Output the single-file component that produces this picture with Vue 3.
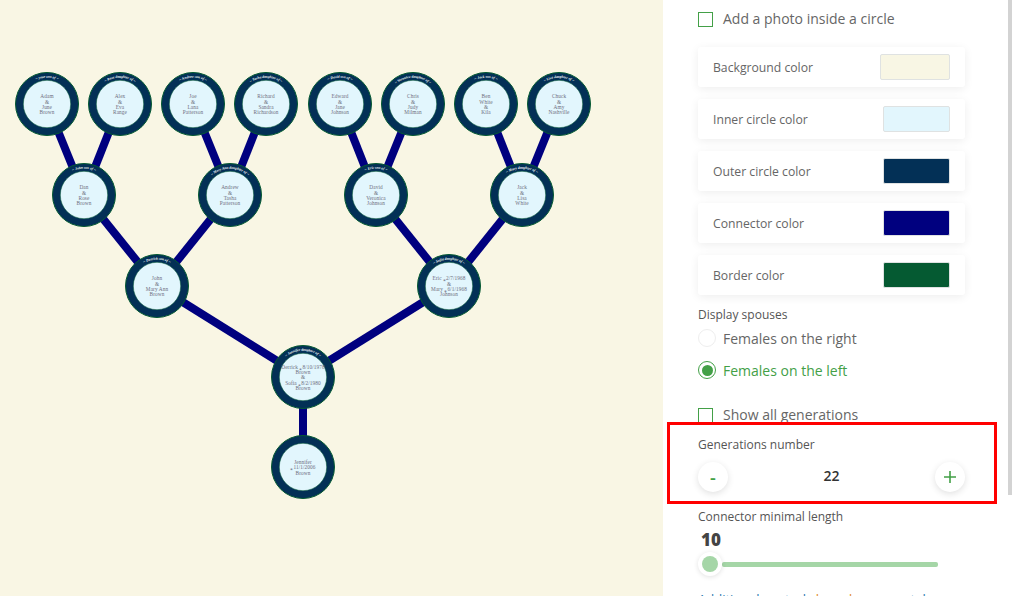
<script setup>
const nodes = [
  { x: 47, y: 104, arc: '~ your son of ~', lines: ['Adam', '&', 'June', 'Brown'] },
  { x: 120, y: 104, arc: '~ Rose daughter of ~', lines: ['Alex', '&', 'Eva', 'Range'] },
  { x: 193, y: 104, arc: '~ Andrew son of ~', lines: ['Joe', '&', 'Lana', 'Patterson'] },
  { x: 266, y: 104, arc: '~ Tasha daughter of ~', lines: ['Richard', '&', 'Sandra', 'Richardson'] },
  { x: 340, y: 104, arc: '~ David son of ~', lines: ['Edward', '&', 'Jane', 'Johnson'] },
  { x: 413, y: 104, arc: '~ Veronica daughter of ~', lines: ['Chris', '&', 'Judy', 'Milman'] },
  { x: 486, y: 104, arc: '~ Jack son of ~', lines: ['Ben', 'White', '&', 'Kila'] },
  { x: 559, y: 104, arc: '~ Lisa daughter of ~', lines: ['Chuck', '&', 'Amy', 'Nashville'] },
  { x: 84, y: 195, arc: '~ John son of ~', lines: ['Dan', '&', 'Rose', 'Brown'] },
  { x: 230, y: 195, arc: '~ Mary Ann daughter of ~', lines: ['Andrew', '&', 'Tasha', 'Patterson'] },
  { x: 376, y: 195, arc: '~ Eric son of ~', lines: ['David', '&', 'Veronica', 'Johnson'] },
  { x: 522, y: 195, arc: '~ Mary daughter of ~', lines: ['Jack', '&', 'Lisa', 'White'] },
  { x: 157, y: 286, arc: '~ Derrick son of ~', lines: ['John', '&', 'Mary Ann', 'Brown'] },
  { x: 449, y: 286, arc: '~ Sofia daughter of ~', lines: ['Eric  ⁎2/7/1968', '&', 'Mary  ⁎6/1/1968', 'Johnson'] },
  { x: 303, y: 377, arc: '~ Jennifer daughter of ~', lines: ['Derrick  ⁎8/10/1978', 'Brown', '&', 'Sofia  ⁎8/2/1980', 'Brown'] },
  { x: 303, y: 467, arc: '', lines: ['Jennifer', '⁎11/1/2006', 'Brown'] },
]

const links = [
  [0, 8], [1, 8], [2, 9], [3, 9], [4, 10], [5, 10], [6, 11], [7, 11],
  [8, 12], [9, 12], [10, 13], [11, 13], [12, 14], [13, 14], [14, 15],
].map(([a, b]) => ({ id: `${a}-${b}`, x1: nodes[a].x, y1: nodes[a].y, x2: nodes[b].x, y2: nodes[b].y }))

const arcPath = (n) => `M ${n.x - 26.3} ${n.y} A 26.3 26.3 0 0 1 ${n.x + 26.3} ${n.y}`
const lineY = (n, i) => n.y + 2.2 + (i - (n.lines.length - 1) / 2) * 5.3

const swatches = [
  { label: 'Background color', color: '#f8f6e4', wide: true },
  { label: 'Inner circle color', color: '#e2f6fd' },
  { label: 'Outer circle color', color: '#033056' },
  { label: 'Connector color', color: '#00007f' },
  { label: 'Border color', color: '#055a32' },
]
</script>

<template>
  <div class="page">
    <main class="canvas">
      <svg class="tree" width="663" height="596" viewBox="0 0 663 596">
        <defs>
          <path v-for="(n, i) in nodes" :id="`arc${i}`" :key="i" :d="arcPath(n)" />
        </defs>
        <line
          v-for="l in links"
          :key="l.id"
          class="link"
          :x1="l.x1"
          :y1="l.y1"
          :x2="l.x2"
          :y2="l.y2"
        />
        <g v-for="(n, i) in nodes" :key="n.x + '-' + n.y">
          <circle class="outer" :cx="n.x" :cy="n.y" r="31.5" />
          <circle class="inner" :cx="n.x" :cy="n.y" r="23.7" />
          <text class="arc">
            <textPath :href="`#arc${i}`" startOffset="50%" text-anchor="middle">{{ n.arc }}</textPath>
          </text>
          <text
            v-for="(t, j) in n.lines"
            :key="j"
            class="name"
            :x="n.x"
            :y="lineY(n, j)"
            text-anchor="middle"
          >{{ t }}</text>
        </g>
      </svg>
    </main>

    <aside class="panel">
      <div class="content">
        <label class="check first">
          <span class="box"></span>
          <span>Add a photo inside a circle</span>
        </label>

        <div class="cards">
          <div v-for="s in swatches" :key="s.label" class="card">
            <span>{{ s.label }}</span>
            <span class="swatch" :class="{ wide: s.wide }" :style="{ background: s.color }"></span>
          </div>
        </div>

        <div class="caption spouses">Display spouses</div>
        <div class="radio">
          <span class="dot"></span>
          <span>Females on the right</span>
        </div>
        <div class="radio on">
          <span class="dot"><i></i></span>
          <span>Females on the left</span>
        </div>

        <label class="check all">
          <span class="box"></span>
          <span>Show all generations</span>
        </label>

        <div class="caption gens">Generations number</div>
        <div class="stepper">
          <span class="round">-</span>
          <span class="count">22</span>
          <span class="round">
            <svg width="14" height="14" viewBox="0 0 14 14"><path d="M7 1v12M1 7h12" stroke="#43a047" stroke-width="1.6" fill="none" /></svg>
          </span>
        </div>

        <div class="caption connector">Connector minimal length</div>
        <div class="value">10</div>
        <div class="slider">
          <span class="thumb"><i></i></span>
          <span class="track"></span>
        </div>

        <div class="more">Additional controls <b>based on</b> parental</div>
      </div>
      <div class="scrollbar"></div>
      <div class="highlight"></div>
    </aside>
  </div>
</template>

<style scoped>
.page {
  width: 1012px;
  height: 596px;
  display: flex;
  overflow: hidden;
  background: #fff;
  font-family: "Open Sans", "Liberation Sans", sans-serif;
  color: #555;
}
.canvas {
  width: 663px;
  flex: none;
  background: #f9f6e4;
}
.tree {
  display: block;
}
.link {
  stroke: #00007f;
  stroke-width: 8;
}
.outer {
  fill: #033056;
  stroke: #055a32;
  stroke-width: 1;
}
.inner {
  fill: #e2f6fd;
  stroke: #055a32;
  stroke-width: 0.5;
}
.arc {
  font-family: "Liberation Serif", serif;
  font-size: 3.6px;
  font-style: italic;
  font-weight: 700;
  fill: #fff;
}
.name {
  font-family: "Liberation Serif", serif;
  font-size: 5.3px;
  letter-spacing: 0.08px;
  fill: #6f6f80;
}
.panel {
  position: relative;
  flex: 1;
  background: #fff;
}
.content {
  padding: 11px 0 0 35px;
  width: 267px;
}
.check {
  display: flex;
  align-items: center;
  gap: 10px;
  font-size: 14px;
  line-height: 16px;
  color: #666;
}
.box {
  width: 13px;
  height: 13px;
  border: 1.5px solid #43a047;
  flex: none;
}
.cards {
  display: flex;
  flex-direction: column;
  gap: 12px;
  margin-top: 20px;
}
.card {
  height: 40px;
  border-radius: 3px;
  box-shadow: 0 2px 10px rgba(0, 0, 0, 0.07);
  display: flex;
  align-items: center;
  justify-content: space-between;
  padding: 0 15px;
  font-size: 12.2px;
  color: #666;
}
.swatch {
  width: 65px;
  height: 24px;
  border: 1px solid #dfe2e2;
  border-radius: 2px;
}
.swatch.wide {
  width: 68px;
}
.caption {
  font-size: 12px;
  line-height: 16px;
  color: #555;
}
.spouses {
  margin-top: 12px;
}
.radio {
  display: flex;
  align-items: center;
  gap: 7px;
  height: 20px;
  margin-top: 5px;
  font-size: 14px;
  color: #666;
}
.radio + .radio {
  margin-top: 12px;
}
.radio.on {
  color: #43a047;
}
.dot {
  box-sizing: border-box;
  width: 18px;
  height: 18px;
  border-radius: 50%;
  border: 1px solid #eee;
  display: flex;
  align-items: center;
  justify-content: center;
  flex: none;
}
.on .dot {
  border-color: #43a047;
}
.dot i {
  width: 11px;
  height: 11px;
  border-radius: 50%;
  background: #43a047;
}
.all {
  margin-top: 27px;
}
.gens {
  margin-top: 14px;
}
.stepper {
  display: flex;
  align-items: center;
  justify-content: space-between;
  margin-top: 9px;
  height: 30px;
}
.round {
  width: 30px;
  height: 30px;
  border-radius: 50%;
  background: #fff;
  box-shadow: 0 2px 7px rgba(0, 0, 0, 0.12);
  display: flex;
  align-items: center;
  justify-content: center;
  color: #43a047;
  font-size: 18px;
  font-weight: 600;
}
.count {
  font-size: 14px;
  line-height: 18px;
  margin-top: -2px;
  color: #333;
  font-weight: 600;
}
.connector {
  margin-top: 17px;
}
.value {
  font-size: 17px;
  line-height: 20px;
  font-weight: 800;
  color: #444;
  margin: 5px 0 0 3px;
}
.slider {
  display: flex;
  align-items: center;
  margin-top: 2px;
  height: 24px;
}
.thumb {
  width: 24px;
  height: 24px;
  border-radius: 50%;
  background: #fff;
  box-shadow: 0 1px 5px rgba(0, 0, 0, 0.12);
  display: flex;
  align-items: center;
  justify-content: center;
  flex: none;
  position: relative;
  z-index: 1;
}
.thumb i {
  width: 16px;
  height: 16px;
  border-radius: 50%;
  background: #a5d6a7;
}
.track {
  width: 216px;
  height: 5px;
  background: #a5d6a7;
  border-radius: 2px;
}
.more {
  margin-top: 14px;
  font-size: 13px;
  color: #2a7ab0;
  white-space: nowrap;
}
.more b {
  font-weight: 400;
  color: #e08a2c;
}
.scrollbar {
  position: absolute;
  top: 0;
  right: 0;
  width: 4px;
  height: 495px;
  background: #d3d3d3;
}
.highlight {
  position: absolute;
  left: 4px;
  top: 422px;
  width: 330px;
  height: 82px;
  border: 3px solid #f00;
  box-sizing: border-box;
}
</style>

<style>
html, body {
  margin: 0;
}
</style>
